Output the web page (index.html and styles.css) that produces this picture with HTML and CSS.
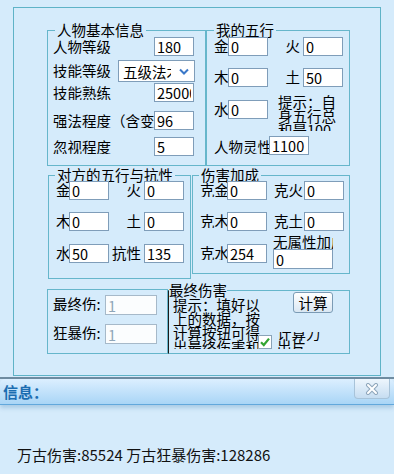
FILE: index.html
```html
<!DOCTYPE html>
<html lang="zh-CN">
<head>
  <meta charset="UTF-8" />
  <meta name="viewport" content="width=device-width, initial-scale=1.0" />
  <title>伤害计算</title>
  <link rel="stylesheet" href="styles.css">
</head>
<body>

  <div class="panel">

    <div class="row row-top">
      <fieldset class="group g-base">
        <legend>人物基本信息</legend>
        <div class="base-rows">
          <div class="line"><span class="lbl">人物等级</span><input class="num" value="180"></div>
          <div class="line">
            <span class="lbl lbl-sel">技能等级</span>
            <div class="select-box">
              <select><option>五级法术伤害</option></select>
              <svg width="10" height="7" viewBox="0 0 10 7"><path d="M1 1.5 L5 5.5 L9 1.5" fill="none" stroke="#3a78c8" stroke-width="2"/></svg>
            </div>
          </div>
          <div class="line"><span class="lbl">技能熟练</span><input class="num" value="25000"></div>
          <div class="line"><span class="lbl">强法程度（含变身）</span><input class="num" value="96"></div>
          <div class="line"><span class="lbl">忽视程度</span><input class="num" value="5"></div>
        </div>
      </fieldset>

      <fieldset class="group g-mine">
        <legend>我的五行</legend>
        <div class="wx-grid">
          <span class="wx-l">金</span><input class="num" value="0">
          <span class="wx-r">火</span><input class="num" value="0">
          <span class="wx-l">木</span><input class="num" value="0">
          <span class="wx-r">土</span><input class="num" value="50">
          <span class="wx-l">水</span><input class="num" value="0">
          <div class="tip-mine">提示：自身五行总和是100</div>
          <div class="spirit"><span class="spirit-l">人物灵性</span><input class="num" value="1100"></div>
        </div>
      </fieldset>
    </div>

    <div class="row row-mid">
      <fieldset class="group g-enemy">
        <legend>对方的五行与抗性</legend>
        <div class="wx-grid enemy-grid">
          <span class="wx-l">金</span><input class="num" value="0">
          <span class="wx-r">火</span><input class="num" value="0">
          <span class="wx-l">木</span><input class="num" value="0">
          <span class="wx-r">土</span><input class="num" value="0">
          <span class="wx-l">水</span><input class="num" value="50">
          <span class="wx-r">抗性</span><input class="num" value="135">
        </div>
      </fieldset>

      <fieldset class="group g-bonus">
        <legend>伤害加成</legend>
        <div class="wx-grid bonus-grid">
          <span class="wx-l">克金</span><input class="num" value="0">
          <span class="wx-r">克火</span><input class="num" value="0">
          <span class="wx-l">克木</span><input class="num" value="0">
          <span class="wx-r">克土</span><input class="num" value="0">
          <span class="wx-l">克水</span><input class="num" value="254">
          <div class="free">
            <span class="free-l">无属性加成</span>
            <input class="num free-in" value="0">
          </div>
        </div>
      </fieldset>
    </div>

    <div class="row row-low">
      <fieldset class="group g-result">
        <div class="dmg-line"><span class="dmg-l">最终伤:</span><input class="num dmg-in" value="1" disabled></div>
        <div class="dmg-line"><span class="dmg-l">狂暴伤:</span><input class="num dmg-in" value="1" disabled></div>
      </fieldset>

      <fieldset class="group g-final">
        <legend>最终伤害</legend>
        <div class="final-body">
          <div class="tip-final">提示：填好以上的数据，按计算按钮可得出最终伤害和狂暴伤害</div>
          <div class="final-side">
            <button class="calc-btn">计算</button>
            <div class="check-row">
              <svg class="check-box" width="14" height="14" viewBox="0 0 14 14">
                <rect x="0.5" y="0.5" width="13" height="13" fill="#fff" stroke="#8aa3b8"/>
                <path d="M3 7.2 L5.8 10 L11 3.6" fill="none" stroke="#32a532" stroke-width="2.2"/>
              </svg>
              <div class="check-text"><div class="check-inner">计算力<br>出片</div></div>
            </div>
          </div>
        </div>
      </fieldset>
    </div>

  </div>

  <div class="sep"></div>
  <div class="info-bar">
    <span class="info-title">信息：</span>
    <div class="close-btn">
      <svg width="14" height="12" viewBox="0 0 14 12">
        <path d="M3 2 L11 10 M11 2 L3 10" stroke="#8ea6bb" stroke-width="4" stroke-linecap="round"/>
        <path d="M3 2 L11 10 M11 2 L3 10" stroke="#fff" stroke-width="2" stroke-linecap="round"/>
      </svg>
    </div>
  </div>

  <div class="msg">万古伤害:85524 万古狂暴伤害:128286</div>

</body>
</html>
```

FILE: styles.css
```css
* {
  box-sizing: border-box;
}

body {
  margin: 0;
  background: #d5ebfb;
  font-family: "Noto Sans CJK SC", "Noto Sans", sans-serif;
  font-size: 14.5px;
  color: #000;
  overflow: hidden;
}

.panel {
  margin: 7px 0 0 13px;
  width: 368px;
  height: 369px;
  border: 1px solid #5fb3c7;
  padding-left: 33px;
}

.row {
  display: flex;
  align-items: flex-start;
}

.row-top { margin-top: 15px; }
.row-mid { margin-top: 2px; }
.row-low { margin-top: 4px; }

.group {
  margin: 0;
  padding: 0;
  min-width: 0;
  border: 1px solid #66b6cb;
}

.group legend {
  padding: 0 2px;
  margin-left: 7px;
  line-height: 14px;
  font-size: 14.5px;
}

input.num {
  width: 40px;
  height: 19px;
  border: 1px solid #7f9db9;
  background: #fff;
  padding: 0 2px;
  font: inherit;
  line-height: 17px;
  color: #000;
  outline: none;
}

/* 人物基本信息 */
.g-base {
  width: 159px;
  height: 143px;
}

.base-rows {
  display: grid;
  grid-template-columns: minmax(0, 1fr);
  grid-template-rows: 23px 23px 28px 26px 20px;
  padding: 0 11px 0 5px;
}

.line {
  display: flex;
  align-items: flex-start;
  min-width: 0;
}

.lbl {
  flex: 1;
  min-width: 0;
  overflow: hidden;
  white-space: nowrap;
  line-height: 15px;
  padding-top: 2px;
}

.lbl-sel {
  flex: none;
  width: 65px;
  padding-top: 3px;
}

.select-box {
  display: flex;
  align-items: center;
  width: 77px;
  height: 22px;
  border: 1px solid #7f9db9;
  background: #fff;
}

.select-box select {
  flex: 1;
  min-width: 0;
  height: 20px;
  border: none;
  background: transparent;
  font: inherit;
  padding: 0 0 0 4px;
  appearance: none;
  -webkit-appearance: none;
  outline: none;
}

.select-box svg {
  margin: 0 5px 0 8px;
}

/* 五行 grids */
.g-mine {
  width: 144px;
  height: 143px;
}

.wx-grid {
  display: grid;
  grid-template-columns: 14px 40px 35px 40px;
  grid-template-rows: 31px 32px 36px 20px;
  padding-left: 7px;
  align-items: start;
}

.wx-l {
  line-height: 15px;
  padding-top: 1px;
  white-space: nowrap;
}

.wx-r {
  justify-self: end;
  padding-right: 3px;
  line-height: 15px;
  padding-top: 1px;
  white-space: nowrap;
}

.tip-mine {
  grid-column: 3 / 5;
  grid-row: 3;
  margin: -5px 0 0 10px;
  width: 62px;
  height: 36px;
  overflow: hidden;
  line-height: 14px;
}

.spirit {
  grid-column: 1 / -1;
  display: flex;
  align-items: flex-start;
}

.spirit-l {
  width: 55px;
  overflow: hidden;
  white-space: nowrap;
  line-height: 15px;
  padding-top: 3px;
}

/* 对方的五行与抗性 */
.g-enemy {
  margin-left: 1px;
  width: 143px;
  height: 111px;
}

.g-enemy legend {
  margin-left: 6px;
}

.enemy-grid {
  grid-template-columns: 13px 40px 35px 40px;
  grid-template-rows: 31px 32px 20px;
  margin-top: -1px;
}

/* 伤害加成 */
.g-bonus {
  margin-left: 1px;
  width: 158px;
  height: 106px;
}

.g-bonus legend {
  margin-left: 6px;
}

.bonus-grid {
  grid-template-columns: 27px 40px 37px 40px;
  grid-template-rows: 31px 32px 20px;
  margin-top: -1px;
}

.bonus-grid .wx-l {
  overflow: hidden;
}

.bonus-grid .wx-r {
  padding-right: 1px;
}

.free {
  grid-column: 3 / 5;
  margin: -9px 0 0 6px;
  display: flex;
  flex-direction: column;
  align-items: flex-start;
}

.free-l {
  width: 60px;
  overflow: hidden;
  white-space: nowrap;
  line-height: 14px;
}

input.free-in {
  width: 60px;
  height: 20px;
}

/* 最终伤 / 狂暴伤 */
.g-result {
  margin-top: 6px;
  width: 121px;
  height: 65px;
  padding: 5px 0 0 5px;
}

.dmg-line {
  display: flex;
  align-items: flex-start;
}

.dmg-line + .dmg-line {
  margin-top: 9px;
}

.dmg-l {
  width: 52px;
  line-height: 15px;
  padding-top: 1px;
  white-space: nowrap;
  overflow: hidden;
}

input.dmg-in {
  width: 52px;
  height: 20px;
  border-color: #a6b9c9;
  background: #fbfdfe;
  color: #8fa6b8;
}

/* 最终伤害 */
.g-final {
  width: 182px;
  height: 71px;
  border-left-color: #1a1a1a;
}

.g-final legend {
  margin-left: 0;
  padding: 0;
}

.final-body {
  display: flex;
  padding-left: 4px;
}

.tip-final {
  width: 87px;
  height: 51px;
  margin-top: 1px;
  overflow: hidden;
  line-height: 14px;
}

.final-side {
  display: flex;
  flex-direction: column;
  align-items: flex-start;
}

.calc-btn {
  margin: -5px 0 0 33px;
  width: 40px;
  height: 21px;
  padding: 0;
  border: 1px solid #7b9bb5;
  border-radius: 3px;
  background: linear-gradient(#ffffff, #d9e7f3);
  font: inherit;
  line-height: 19px;
  color: #000;
}

.check-row {
  display: flex;
  align-items: flex-start;
  margin: 22px 0 0 -2px;
}

.check-text {
  margin: -3px 0 0 5px;
  width: 48px;
  height: 17px;
  overflow: hidden;
  line-height: 13px;
}

.check-inner {
  margin-top: -6px;
}

/* 信息栏 */
.sep {
  margin-top: 1px;
  height: 2px;
  background: #6f8ca1;
}

.info-bar {
  display: flex;
  justify-content: space-between;
  align-items: flex-start;
  height: 26px;
  border-radius: 5px 5px 0 0;
  background: linear-gradient(#dcefff, #a9d5f6);
  border-bottom: 1px solid #62a8dc;
  box-shadow: 0 3px 4px rgba(70, 130, 180, 0.3);
}

.info-title {
  padding-left: 3px;
  line-height: 25px;
  font-size: 15px;
  font-weight: bold;
  color: #1b6db1;
}

.close-btn {
  display: flex;
  align-items: center;
  justify-content: center;
  width: 36px;
  height: 20px;
  margin-right: 4px;
  border: 1px solid #a8c3d9;
  border-top: none;
  border-radius: 0 0 4px 4px;
  background: linear-gradient(#eef6fd, #c6ddf1);
}

.msg {
  margin-top: 40px;
  padding-left: 17px;
  font-size: 15px;
  line-height: 20px;
  color: #111;
}
```
